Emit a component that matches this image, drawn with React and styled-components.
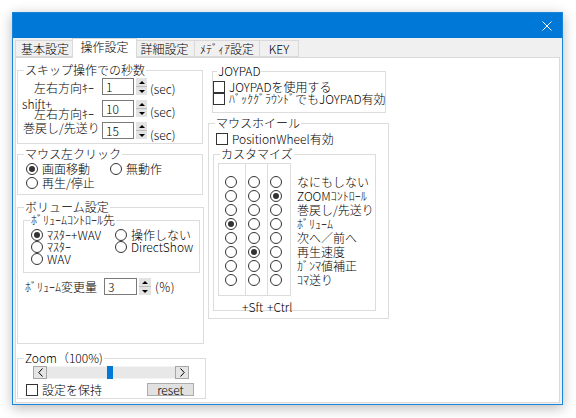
import React from "react";
import styled, { createGlobalStyle } from "styled-components";

const GlobalStyle = createGlobalStyle`
  html, body {
    margin: 0;
    padding: 0;
    background: #ffffff;
  }
  body {
    font-family: "Noto Sans CJK JP", "Noto Sans", sans-serif;
    font-size: 12px;
    font-weight: 300;
    color: #000;
  }
`;

const Page = styled.div`
	width: 576px;
	height: 418px;
	box-sizing: border-box;
	padding: 12px 0 0 12px;
`;

const Window = styled.div`
	width: 551px;
	height: 393px;
	box-sizing: border-box;
	border: 1px solid #1a84d8;
	background: #f0f0f0;
	box-shadow: 0 3px 12px rgba(0, 0, 0, 0.28);
	display: flex;
	flex-direction: column;
`;

const TitleBar = styled.div`
	height: 25px;
	flex-shrink: 0;
	background: #0078d7;
	display: flex;
	align-items: center;
	justify-content: flex-end;
	padding-right: 10px;
`;

const TabRow = styled.div`
	height: 19px;
	flex-shrink: 0;
	display: flex;
	align-items: flex-end;
	padding-left: 2px;
	position: relative;
	z-index: 1;
`;

const Tab = styled.div`
	box-sizing: border-box;
	width: ${({ $w }) => $w}px;
	height: ${({ $active }) => ($active ? 20 : 17)}px;
	margin: 0 ${({ $active }) => ($active ? -2 : 0)}px
		${({ $active }) => ($active ? -1 : 0)}px
		${({ $first, $active }) => ($first ? 0 : $active ? -3 : -1)}px;
	border: 1px solid #d9d9d9;
	border-bottom: ${({ $active }) => ($active ? "none" : "1px solid #d9d9d9")};
	background: ${({ $active }) => ($active ? "#ffffff" : "#f0f0f0")};
	text-align: center;
	line-height: ${({ $active }) => ($active ? 16 : 15)}px;
	white-space: nowrap;
	position: relative;
	z-index: ${({ $active }) => ($active ? 2 : 1)};
`;

const Panel = styled.div`
	flex: 1;
	margin: 0 2px 1px 2px;
	background: #ffffff;
	border: 1px solid #d9d9d9;
	display: flex;
	padding-left: 1px;
	min-height: 0;
`;

const Column = styled.div`
	width: ${({ $w }) => $w}px;
	display: flex;
	flex-direction: column;
	flex-shrink: 0;
`;

const Group = styled.fieldset`
	box-sizing: border-box;
	width: ${({ $w }) => $w}px;
	height: ${({ $h }) => $h}px;
	margin: ${({ $mt = 0 }) => $mt}px 0 0 ${({ $ml = 0 }) => $ml}px;
	padding: 0;
	min-width: 0;
	border: 1px solid #dcdcdc;
	flex-shrink: 0;
`;

const Legend = styled.legend`
	margin-left: ${({ $x = 6 }) => $x}px;
	padding: 0 1px;
	height: 12px;
	line-height: 12px;
	font-size: 12px;
	white-space: nowrap;
`;

const Body = styled.div`
	padding: ${({ $pt = 0 }) => $pt}px 0 0 ${({ $pl = 0 }) => $pl}px;
`;

const SecRow = styled.div`
	height: 22px;
	display: flex;
	align-items: flex-start;
`;

const RowLabel = styled.div`
	width: 84px;
	flex-shrink: 0;
	margin-top: ${({ $mt = 0 }) => $mt}px;
	line-height: ${({ $lh = 12 }) => $lh}px;
	white-space: nowrap;
`;

const LabelLine = styled.div`
	padding-left: ${({ $pl = 0 }) => $pl}px;
`;

const Field = styled.div`
	box-sizing: border-box;
	width: ${({ $w }) => $w}px;
	height: 17px;
	border: 1px solid #7a7a7a;
	background: #fff;
	padding-left: 3px;
	line-height: 15px;
`;

const Spin = styled.div`
	box-sizing: border-box;
	margin-left: 2px;
	width: ${({ $w = 11 }) => $w}px;
	height: 17px;
	display: flex;
	flex-direction: column;
	background: #bdbdbd;
	gap: 1px;
`;

const SpinButton = styled.div`
	flex: 1;
	background: #e3e3e3;
	display: flex;
	align-items: center;
	justify-content: center;

	&::after {
		content: "";
		border-left: 3px solid transparent;
		border-right: 3px solid transparent;
		${({ $down }) =>
			$down ? "border-top: 3px solid #000;" : "border-bottom: 3px solid #000;"}
	}
`;

const SpinBox = styled.div`
	display: flex;
	align-items: flex-start;
	flex-shrink: 0;
	margin-left: ${({ $ml = 0 }) => $ml}px;
`;

const Unit = styled.span`
	margin: ${({ $mt = 5 }) => $mt}px 0 0 ${({ $ml = 3 }) => $ml}px;
	line-height: 12px;
	white-space: nowrap;
`;

const RadioGrid = styled.div`
	display: grid;
	grid-template-columns: ${({ $col }) => $col}px auto;
	grid-auto-rows: ${({ $row }) => $row}px;
`;

const Option = styled.div`
	display: flex;
	align-items: center;
	gap: 4px;
	white-space: nowrap;
	line-height: 12px;
`;

const RadioMark = styled.span`
	box-sizing: border-box;
	width: 12px;
	height: 12px;
	border: 1px solid #333;
	border-radius: 50%;
	background: #fff;
	display: inline-flex;
	align-items: center;
	justify-content: center;
	flex-shrink: 0;

	&::after {
		content: "";
		width: 6px;
		height: 6px;
		border-radius: 50%;
		background: ${({ $on }) => ($on ? "#333" : "transparent")};
	}
`;

const CheckMark = styled.span`
	box-sizing: border-box;
	width: 12px;
	height: 12px;
	border: 1px solid #333;
	background: #fff;
	flex-shrink: 0;
`;

const CheckRow = styled.div`
	height: 12px;
	display: flex;
	align-items: center;
	gap: 4px;
	padding-left: ${({ $pl = 0 }) => $pl}px;
	white-space: nowrap;
	line-height: 12px;
`;

const AmountRow = styled.div`
	margin-top: 5px;
	padding-left: 7px;
	display: flex;
	align-items: center;
`;

const ScrollBar = styled.div`
	margin-left: 15px;
	width: 156px;
	height: 13px;
	display: flex;
`;

const ScrollArrow = styled.div`
	box-sizing: border-box;
	width: 14px;
	height: 13px;
	border: 1px solid #a6a6a6;
	background: #e5e5e5;
	display: flex;
	align-items: center;
	justify-content: center;
	flex-shrink: 0;
`;

const Track = styled.div`
	flex: 1;
	background: #e8e8e8;
	box-shadow: inset 0 1px 0 #f4f4f4, inset 0 -1px 0 #f4f4f4;
	display: flex;
`;

const Thumb = styled.div`
	margin-left: ${({ $at }) => $at}px;
	width: 6px;
	height: 13px;
	background: #0078d7;
`;

const BottomRow = styled.div`
	margin-top: 4px;
	padding-left: 8px;
	display: flex;
	align-items: center;
`;

const ResetButton = styled.button`
	margin: 0 11px 0 auto;
	width: 47px;
	height: 13px;
	padding: 0;
	box-sizing: border-box;
	border: 1px solid #adadad;
	background: #e1e1e1;
	font-family: inherit;
	font-size: 12px;
	font-weight: inherit;
	line-height: 11px;
	color: #000;
`;

const CustomGrid = styled.div`
	margin: 3px 0 0 4px;
	display: flex;
	align-items: flex-start;
`;

const RadioCol = styled.div`
	box-sizing: border-box;
	width: ${({ $w }) => $w}px;
	height: 133px;
	margin-left: ${({ $first }) => ($first ? 0 : -1)}px;
	border: 1px solid #dcdcdc;
	padding: 11px 0 0 ${({ $pl }) => $pl}px;
`;

const GridRow = styled.div`
	height: 14px;
	display: flex;
	align-items: center;
`;

const NameCol = styled.div`
	margin-left: 6px;
	padding-top: 12px;
`;

const NameRow = styled.div`
	height: 14px;
	line-height: 14px;
	white-space: nowrap;
`;

const ModRow = styled.div`
	margin-top: 4px;
	padding-left: 28px;
	display: flex;
	line-height: 14px;
`;

const ModName = styled.span`
	width: ${({ $w }) => ($w ? `${$w}px` : "auto")};
`;

const Radio = ({ on, children }) => (
	<Option>
		<RadioMark $on={on} />
		{children}
	</Option>
);

const Spinner = ({ value, w = 32, sw, ml }) => (
	<SpinBox $ml={ml}>
		<Field $w={w}>{value}</Field>
		<Spin $w={sw}>
			<SpinButton />
			<SpinButton $down />
		</Spin>
	</SpinBox>
);

const tabs = [
	{ name: "基本設定", w: 60 },
	{ name: "操作設定", w: 65, active: true },
	{ name: "詳細設定", w: 61 },
	{ name: "ﾒﾃﾞｨｱ設定", w: 66 },
	{ name: "KEY", w: 40 },
];

const wheelActions = [
	"なにもしない",
	"ZOOMｺﾝﾄﾛｰﾙ",
	"巻戻し/先送り",
	"ﾎﾞﾘｭｰﾑ",
	"次へ／前へ",
	"再生速度",
	"ｶﾞﾝﾏ値補正",
	"ｺﾏ送り",
];

// selected row for each column: plain, +Sft, +Ctrl
const wheelPicks = [3, 5, 1];

const App = () => {
	return (
		<>
			<GlobalStyle />
			<Page>
				<Window>
					<TitleBar>
						<svg width="10" height="10" viewBox="0 0 10 10">
							<path d="M0.5 0.5 L9.5 9.5 M9.5 0.5 L0.5 9.5" stroke="#fff" strokeWidth="1" />
						</svg>
					</TitleBar>
					<TabRow>
						{tabs.map((t, i) => (
							<Tab key={t.name} $w={t.w} $active={t.active} $first={i === 0}>
								{t.name}
							</Tab>
						))}
					</TabRow>
					<Panel>
						<Column $w={191}>
							<Group $w={186} $h={80} $mt={6}>
								<Legend>スキップ操作での秒数</Legend>
								<Body $pt={2}>
									<SecRow>
										<RowLabel $mt={4}>
											<LabelLine $pl={16}>左右方向ｷｰ</LabelLine>
										</RowLabel>
										<Spinner value="1" />
										<Unit $mt={5}>(sec)</Unit>
									</SecRow>
									<SecRow>
										<RowLabel $mt={-1} $lh={10}>
											<LabelLine $pl={4}>shift+</LabelLine>
											<LabelLine $pl={16}>左右方向ｷｰ</LabelLine>
										</RowLabel>
										<Spinner value="10" />
										<Unit $mt={6}>(sec)</Unit>
									</SecRow>
									<SecRow>
										<RowLabel $mt={0}>
											<LabelLine $pl={5}>巻戻し/先送り</LabelLine>
										</RowLabel>
										<Spinner value="15" />
										<Unit $mt={7}>(sec)</Unit>
									</SecRow>
								</Body>
							</Group>

							<Group $w={186} $h={47} $mt={4}>
								<Legend>マウス左クリック</Legend>
								<Body $pt={2} $pl={8}>
									<RadioGrid $col={84} $row={14}>
										<Radio on>画面移動</Radio>
										<Radio>無動作</Radio>
										<Radio>再生/停止</Radio>
									</RadioGrid>
								</Body>
							</Group>

							<Group $w={187} $h={143} $mt={6}>
								<Legend>ボリューム設定</Legend>
								<Group $w={177} $h={59} $mt={1} $ml={5}>
									<Legend>ﾎﾞﾘｭｰﾑｺﾝﾄﾛｰﾙ先</Legend>
									<Body $pt={3} $pl={7}>
										<RadioGrid $col={84} $row={12}>
											<Radio on>ﾏｽﾀｰ+WAV</Radio>
											<Radio>操作しない</Radio>
											<Radio>ﾏｽﾀｰ</Radio>
											<Radio>DirectShow</Radio>
											<Radio>WAV</Radio>
										</RadioGrid>
									</Body>
								</Group>
								<AmountRow>
									<span>ﾎﾞﾘｭｰﾑ変更量</span>
									<Spinner value="3" w={33} sw={12} ml={7} />
									<Unit $mt={0} $ml={4}>(％)</Unit>
								</AmountRow>
							</Group>

							<Group $w={189} $h={47} $mt={8}>
								<Legend>Zoom（100%)</Legend>
								<Body $pt={2}>
									<ScrollBar>
										<ScrollArrow>
											<svg width="5" height="9" viewBox="0 0 5 9">
												<path d="M4.5 0.5 L0.8 4.5 L4.5 8.5" fill="none" stroke="#000" strokeWidth="1" />
											</svg>
										</ScrollArrow>
										<Track>
											<Thumb $at={60} />
										</Track>
										<ScrollArrow>
											<svg width="5" height="9" viewBox="0 0 5 9">
												<path d="M0.5 0.5 L4.2 4.5 L0.5 8.5" fill="none" stroke="#000" strokeWidth="1" />
											</svg>
										</ScrollArrow>
									</ScrollBar>
									<BottomRow>
										<CheckRow>
											<CheckMark />
											設定を保持
										</CheckRow>
										<ResetButton>reset</ResetButton>
									</BottomRow>
								</Body>
							</Group>
						</Column>

						<Column $w={200}>
							<Group $w={174} $h={48} $mt={7} $ml={4}>
								<Legend $x={4}>JOYPAD</Legend>
								<Body $pt={4}>
									<CheckRow>
										<CheckMark />
										JOYPADを使用する
									</CheckRow>
									<CheckRow>
										<CheckMark />
										ﾊﾞｯｸｸﾞﾗｳﾝﾄﾞでもJOYPAD有効
									</CheckRow>
								</Body>
							</Group>

							<Group $w={181} $h={202} $mt={4}>
								<Legend>マウスホイール</Legend>
								<Body $pt={4}>
									<CheckRow $pl={7}>
										<CheckMark />
										PositionWheel有効
									</CheckRow>
									<Group $w={163} $h={163} $mt={3} $ml={4}>
										<Legend>カスタマイズ</Legend>
										<CustomGrid>
											{[
												{ w: 28, pl: 6 },
												{ w: 23, pl: 2 },
												{ w: 24, pl: 2 },
											].map((c, ci) => (
												<RadioCol key={ci} $w={c.w} $pl={c.pl} $first={ci === 0}>
													{wheelActions.map((a, ri) => (
														<GridRow key={a}>
															<RadioMark $on={wheelPicks[ci] === ri} />
														</GridRow>
													))}
												</RadioCol>
											))}
											<NameCol>
												{wheelActions.map((a) => (
													<NameRow key={a}>{a}</NameRow>
												))}
											</NameCol>
										</CustomGrid>
										<ModRow>
											<ModName $w={25}>+Sft</ModName>
											<ModName>+Ctrl</ModName>
										</ModRow>
									</Group>
								</Body>
							</Group>
						</Column>
					</Panel>
				</Window>
			</Page>
		</>
	);
};

export default App;
